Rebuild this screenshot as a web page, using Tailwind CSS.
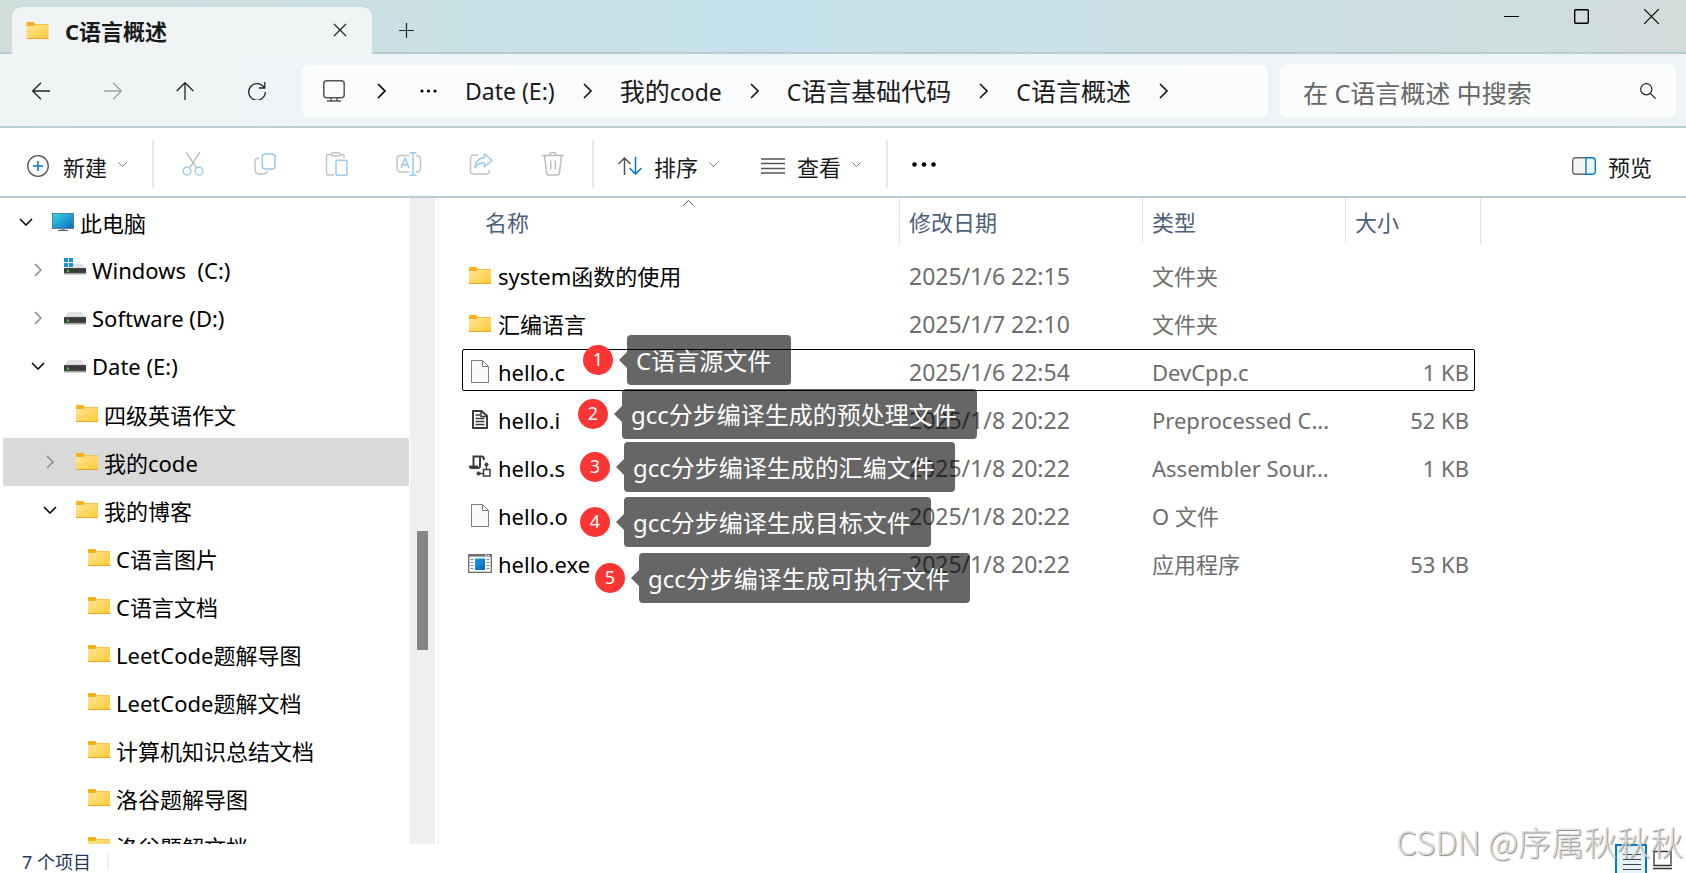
<!DOCTYPE html>
<html lang="zh-CN">
<head>
<meta charset="utf-8">
<meta name="viewport" content="width=device-width, initial-scale=1">
<title>C语言概述</title>
<script src="https://cdn.jsdelivr.net/npm/@tailwindcss/browser@4"></script>
</head>
<body class="flex h-screen flex-col overflow-hidden bg-white font-['Noto_Sans','Noto_Sans_CJK_SC',sans-serif] text-[22px] leading-8 text-[#1a1a1a]">

<!-- Shared symbols -->
<svg class="absolute size-0" aria-hidden="true">
  <defs>
    <linearGradient id="gf" x1="0" y1="0" x2="1" y2="1"><stop offset="0" stop-color="#ffe69c"/><stop offset="1" stop-color="#ffc933"/></linearGradient>
    <linearGradient id="gd" x1="0" y1="0" x2="0" y2="1"><stop offset="0" stop-color="#4a4a4a"/><stop offset="0.5" stop-color="#333"/><stop offset="1" stop-color="#4d4d4d"/></linearGradient>
    <linearGradient id="gm" x1="0" y1="0" x2="1" y2="1"><stop offset="0" stop-color="#36d8e2"/><stop offset="1" stop-color="#0a6cc4"/></linearGradient>
    <linearGradient id="gb" x1="0" y1="0" x2="1" y2="1"><stop offset="0" stop-color="#1f9be6"/><stop offset="1" stop-color="#0466b4"/></linearGradient>
    <symbol id="folder" viewBox="0 0 22 18"><path d="M0 1q0-1 1-1h6l2 2-1 2H0z" fill="#f7b316"/><path d="M0 4h7l2-2h13v14.500H0z" fill="url(#gf)"/><path d="M8.500 2.500H22" stroke="#f3c24a"/><path d="M0 16.500h22" stroke="#e6a823"/></symbol>
    <symbol id="drive" viewBox="0 0 22 18"><path d="M4 3h14l4 6H0z" fill="#dfe1e5"/><path d="M0 8h22v6H0z" fill="url(#gd)"/><path d="M0 14h22v1.500H0z" fill="#a3a3a3"/><path d="M3 10.500h2v2H3z" fill="#2be52b"/></symbol>
    <symbol id="windrive" viewBox="0 0 22 18"><path d="M9 6h9l4 5H0z" fill="#dfe1e5"/><path d="M0 10h22v5H0z" fill="url(#gd)"/><path d="M0 15h22v1.500H0z" fill="#a3a3a3"/><path d="M3 12h2v2H3z" fill="#2be52b"/><path d="M0 0h4v4H0zM5 0h4v4H5zM0 5h4v4H0zM5 5h4v4H5z" fill="#1292de"/></symbol>
    <symbol id="pc" viewBox="0 0 22 19"><path d="M0 0h22v16H0z" fill="#5b7c99"/><path d="M1 1h20v14H1z" fill="url(#gm)"/><path d="M9 16h4v2H9z" fill="#8f9499"/><path d="M6 17.500h10" stroke="#555b61"/></symbol>
    <symbol id="cr" viewBox="0 0 8 14"><path d="M1 1l6 6-6 6" fill="none" stroke="currentColor" stroke-width="1.500"/></symbol>
    <symbol id="cd" viewBox="0 0 14 8"><path d="M1 1l6 6 6-6" fill="none" stroke="currentColor" stroke-width="1.500"/></symbol>
    <symbol id="crumb" viewBox="0 0 9 16"><path d="M1 1l7 7-7 7" fill="none" stroke="currentColor" stroke-width="1.700"/></symbol>
    <symbol id="cds" viewBox="0 0 9 5"><path d="M.5.500l4 4 4-4" fill="none" stroke="#777"/></symbol>
    <symbol id="page" viewBox="0 0 18 23"><path d="M.5.500h11l6 6v16H.500z" fill="#fafafa" stroke="#808080"/><path d="M11.500.500v6h6" fill="none" stroke="#808080"/></symbol>
  </defs>
</svg>

<!-- Title bar -->
<header class="flex h-[54px] shrink-0 items-start border-b-2 border-[#b8ced3] bg-linear-to-r from-[#cfdedb] via-[#c4e1eb] via-45% to-[#d1dddb]">
  <div class="relative z-10 ml-3 mt-[7px] flex h-[47px] w-[360px] shrink-0 items-center rounded-t-[10px] bg-[#f0f4f5] pl-[14px] pr-[25px]">
    <svg class="h-[18px] w-[23px] shrink-0"><use href="#folder"/></svg>
    <h1 class="ml-4 flex-1 font-bold">C语言概述</h1>
    <button aria-label="关闭标签页" class="pb-[2px]"><svg class="size-[14px]" viewBox="0 0 14 14" fill="none" stroke="#222" stroke-width="1.200"><path d="M1 1l12 12M13 1L1 13"/></svg></button>
  </div>
  <button aria-label="新建标签页" class="ml-[27px] mt-[23px]"><svg class="size-[15px]" viewBox="0 0 15 15" stroke="#222" stroke-width="1.200"><path d="M7.500 0v15M0 7.500h15"/></svg></button>
  <div class="ml-auto mr-[27px] mt-[9px] flex items-center gap-[55px]">
    <button aria-label="最小化"><svg class="size-[15px]" viewBox="0 0 15 15" stroke="#000"><path d="M0 7.500h15"/></svg></button>
    <button aria-label="最大化"><svg class="size-[15px]" viewBox="0 0 15 15" fill="none" stroke="#000" stroke-width="1.400"><rect x=".7" y=".7" width="13.600" height="13.600" rx="1"/></svg></button>
    <button aria-label="关闭"><svg class="size-[15px]" viewBox="0 0 15 15" fill="none" stroke="#000" stroke-width="1.200"><path d="M0 0l15 15M15 0L0 15"/></svg></button>
  </div>
</header>

<!-- Navigation -->
<nav class="flex h-[74px] shrink-0 items-center border-b-2 border-[#b8ced3] bg-linear-to-r from-[#f0f4f5] via-[#edf5f7] to-[#f0f4f6] pl-8 pr-[10px] pt-[2px]">
  <div class="flex shrink-0 items-center gap-[54px]">
    <button aria-label="后退"><svg class="size-[18px]" viewBox="0 0 18 18" fill="none" stroke="#222" stroke-width="1.300"><path d="M18 9H.7M9 .7L.7 9 9 17.300"/></svg></button>
    <button aria-label="前进" disabled><svg class="size-[18px]" viewBox="0 0 18 18" fill="none" stroke="#9ea2a3" stroke-width="1.300"><path d="M0 9h17.300M9 .7L17.300 9 9 17.300"/></svg></button>
    <button aria-label="上移"><svg class="size-[18px]" viewBox="0 0 18 18" fill="none" stroke="#222" stroke-width="1.300"><path d="M9 18V.7M.7 9L9 .7 17.300 9"/></svg></button>
    <button aria-label="刷新"><svg class="size-[18px]" viewBox="0 0 18 18" fill="none" stroke="#222" stroke-width="1.300"><path d="M16.300 6A8.300 8.300 0 1 0 17.300 10M16.800 0v6h-6"/></svg></button>
  </div>
  <div class="ml-9 flex h-[53px] flex-1 items-center overflow-hidden rounded-lg bg-[#fbfcfe] pl-[21px] text-[25px] whitespace-nowrap">
    <button aria-label="此电脑"><svg class="size-[22px]" viewBox="0 0 22 22" fill="none" stroke="#555" stroke-width="1.500"><rect x=".8" y=".8" width="20.400" height="17" rx="3"/><path d="M8 18v3M14 18v3M4 21h14"/></svg></button>
    <svg class="ml-8 h-4 w-[9px] text-black"><use href="#crumb"/></svg>
    <button aria-label="更多" class="ml-[34px] mr-[28px]"><svg class="h-1 w-[17px]" viewBox="0 0 17 4"><circle cx="2" cy="2" r="1.600"/><circle cx="8.500" cy="2" r="1.600"/><circle cx="15" cy="2" r="1.600"/></svg></button>
    <div class="flex items-center gap-[28px]">
      <button class="text-[23px]">Date (E:)</button><svg class="h-4 w-[9px]"><use href="#crumb"/></svg>
      <button>我的<span class="text-[23px]">code</span></button><svg class="h-4 w-[9px]"><use href="#crumb"/></svg>
      <button><span class="text-[23px]">C</span>语言基础代码</button><svg class="h-4 w-[9px]"><use href="#crumb"/></svg>
      <button><span class="text-[23px]">C</span>语言概述</button><svg class="h-4 w-[9px]"><use href="#crumb"/></svg>
    </div>
  </div>
  <label class="ml-3 flex h-[54px] w-[396px] items-center rounded-lg bg-[#fbfdfc] pl-[23px] pr-5">
    <input type="search" aria-label="搜索" placeholder="在 C语言概述 中搜索" class="min-w-0 flex-1 bg-transparent pt-1 text-[25px] outline-none placeholder:text-[#666]">
    <svg class="size-4 shrink-0" viewBox="0 0 16 16" fill="none" stroke="#222" stroke-width="1.200"><circle cx="6.300" cy="6.300" r="5.600"/><path d="M10.300 10.300l5.400 5.400"/></svg>
  </label>
</nav>

<!-- Command bar -->
<div class="flex h-[70px] shrink-0 items-center border-b-2 border-[#b8ced3] pl-[27px] pr-[34px] pt-[2px] whitespace-nowrap">
  <button class="flex items-center pt-2">
    <svg class="mb-[2px] size-[22px]" viewBox="0 0 22 22" fill="none"><circle cx="11" cy="11" r="10.300" stroke="#555" stroke-width="1.300"/><path d="M11 6v10M6 11h10" stroke="#0078d4" stroke-width="1.500"/></svg>
    <span class="ml-[14px] mr-[11px]">新建</span>
    <svg class="mb-[6px] h-[5px] w-[9px]"><use href="#cds"/></svg>
  </button>
  <span class="ml-[25px] mt-[2px] h-12 w-[2px] bg-[#ebebeb]"></span>
  <div class="ml-[27px] flex items-center gap-12 pt-[2px]">
    <button aria-label="剪切" disabled><svg class="size-6" viewBox="0 0 24 24" fill="none" stroke-width="1.400"><path d="M5 0l10.500 16M19 0L8.500 16" stroke="#bdbdbd"/><circle cx="6" cy="19.200" r="3.900" stroke="#99c9ee"/><circle cx="18" cy="19.200" r="3.900" stroke="#99c9ee"/></svg></button>
    <button aria-label="复制" disabled><svg class="size-6" viewBox="0 0 24 24" fill="none" stroke-width="1.500"><path d="M6 6q-4 0-4 4v7q0 5 5 5h3q4 0 4-3" stroke="#c4c4c4"/><rect x="9.300" y="2" width="12.700" height="15" rx="3" stroke="#99c9ee"/></svg></button>
    <button aria-label="粘贴" disabled><svg class="size-6" viewBox="0 0 24 24" fill="none" stroke-width="1.500"><path d="M9 23H3q-1.500 0-1.500-1.500V4Q1.500 2.500 3 2.500h4M15 2.500h3q1 0 1 1.500v2" stroke="#c4c4c4"/><rect x="6.500" y=".8" width="9" height="3" rx="1.500" stroke="#c4c4c4"/><rect x="11" y="8.300" width="11" height="15" rx="1.500" stroke="#99c9ee"/></svg></button>
    <button aria-label="重命名" disabled><svg class="size-6 overflow-visible" viewBox="0 0 24 24" fill="none" stroke-width="1.500"><path d="M12.500 3.500H4Q0 3.500 0 7v9q0 4 4 4h8.500M19 3.500q4.500 0 4.500 4v8.500q0 4-4.500 4" stroke="#c4c4c4"/><path d="M16 .8v22.400M12.500.8h7M12.500 23.200h7M4 16l4-9.500L12 16M5.500 13h5" stroke="#99c9ee"/></svg></button>
    <button aria-label="共享" disabled><svg class="size-6" viewBox="0 0 24 24" fill="none" stroke-width="1.500"><path d="M9 3H5Q1.500 3 1.500 6.500v12Q1.500 22 5 22h12q3.500 0 3.500-4" stroke="#c4c4c4"/><path d="M15.500 1.800L23 8.500l-7.500 6.500v-4Q9 10.500 6 16q0-9.500 9.500-10.500z" stroke="#99c9ee" stroke-linejoin="round"/></svg></button>
    <button aria-label="删除" disabled><svg class="size-6" viewBox="0 0 24 24" fill="none" stroke="#bdbdbd" stroke-width="1.500"><path d="M1 3.500h22M8.500 3.500q0-3 3.500-3t3.500 3M3.500 3.500l2 17q.2 2.500 2.500 2.500h8q2.300 0 2.500-2.500l2-17M9.700 8.500v9M14.300 8.500v9"/></svg></button>
  </div>
  <span class="ml-[27px] mt-[2px] h-12 w-[2px] bg-[#ebebeb]"></span>
  <button class="ml-6 flex items-center pt-2">
    <svg class="mb-[2px] h-[18px] w-6" viewBox="0 0 24 18" fill="none" stroke-width="1.500"><path d="M6.500 18V1M.5 7l6-6 6 6" stroke="#555"/><path d="M17.500 0v17M11.500 11l6 6 6-6" stroke="#0078d4"/></svg>
    <span class="ml-3 mr-[11px]">排序</span>
    <svg class="mb-[6px] h-[5px] w-[9px]"><use href="#cds"/></svg>
  </button>
  <button class="ml-[43px] flex items-center pt-2">
    <svg class="mb-[2px] h-4 w-6" viewBox="0 0 24 16" stroke="#555" stroke-width="1.300"><path d="M0 1h24M0 5.500h24M0 10.500h24M0 15h24"/></svg>
    <span class="ml-3 mr-[11px]">查看</span>
    <svg class="mb-[6px] h-[5px] w-[9px]"><use href="#cds"/></svg>
  </button>
  <span class="ml-[25px] mt-[2px] h-12 w-[2px] bg-[#ebebeb]"></span>
  <button aria-label="查看更多" class="ml-6 pt-[2px]"><svg class="h-[5px] w-6" viewBox="0 0 24 5"><circle cx="2.500" cy="2.500" r="2.300"/><circle cx="12" cy="2.500" r="2.300"/><circle cx="21.500" cy="2.500" r="2.300"/></svg></button>
  <button class="ml-auto flex items-center gap-3 pt-2">
    <svg class="mb-[2px] h-[18px] w-6" viewBox="0 0 24 18" fill="none" stroke-width="1.400"><path d="M14 .7H4Q.7.700.7 4v10q0 3.300 3.300 3.300h10" fill="#f5f5f5" stroke="#666"/><path d="M14 .7h6q3.300 0 3.300 3.300v10q0 3.300-3.300 3.300h-6z" fill="#eef8ff" stroke="#0078d4"/></svg>
    <span>预览</span>
  </button>
</div>

<div class="flex min-h-0 flex-1">
  <!-- Folder tree -->
  <aside class="flex w-[439px] shrink-0 border-r-2 border-[#f5f5f5] text-black">
    <ul class="min-w-0 flex-1 overflow-hidden pl-[3px] pr-px whitespace-nowrap">
      <li class="flex h-12 items-center pl-[13px]"><span class="flex w-5 justify-center"><svg class="h-2 w-[14px]"><use href="#cd"/></svg></span><svg class="ml-4 h-[19px] w-[22px]"><use href="#pc"/></svg><span class="ml-[6px] pt-px">此电脑</span></li>
      <li class="flex h-12 items-center pl-[25px]"><span class="flex w-5 justify-center text-[#8a8a8a]"><svg class="h-[14px] w-2"><use href="#cr"/></svg></span><svg class="mb-[6px] ml-4 h-[18px] w-[22px]"><use href="#windrive"/></svg><span class="ml-[6px] whitespace-pre">Windows  (C:)</span></li>
      <li class="flex h-12 items-center pl-[25px]"><span class="flex w-5 justify-center text-[#8a8a8a]"><svg class="h-[14px] w-2"><use href="#cr"/></svg></span><svg class="ml-4 h-[18px] w-[22px]"><use href="#drive"/></svg><span class="ml-[6px]">Software (D:)</span></li>
      <li class="flex h-12 items-center pl-[25px]"><span class="flex w-5 justify-center"><svg class="h-2 w-[14px]"><use href="#cd"/></svg></span><svg class="ml-4 h-[18px] w-[22px]"><use href="#drive"/></svg><span class="ml-[6px]">Date (E:)</span></li>
      <li class="flex h-12 items-center pl-[73px]"><svg class="h-[18px] w-[22px]"><use href="#folder"/></svg><span class="ml-[6px] pt-px">四级英语作文</span></li>
      <li class="flex h-12 items-center rounded-xs bg-[#d9d9d9] pl-[37px]" aria-current="true"><span class="flex w-5 justify-center text-[#8a8a8a]"><svg class="h-[14px] w-2"><use href="#cr"/></svg></span><svg class="ml-4 h-[18px] w-[22px]"><use href="#folder"/></svg><span class="ml-[6px] pt-px">我的code</span></li>
      <li class="flex h-12 items-center pl-[37px]"><span class="flex w-5 justify-center"><svg class="h-2 w-[14px]"><use href="#cd"/></svg></span><svg class="ml-4 h-[18px] w-[22px]"><use href="#folder"/></svg><span class="ml-[6px] pt-px">我的博客</span></li>
      <li class="flex h-12 items-center pl-[85px]"><svg class="h-[18px] w-[22px]"><use href="#folder"/></svg><span class="ml-[6px] pt-px">C语言图片</span></li>
      <li class="flex h-12 items-center pl-[85px]"><svg class="h-[18px] w-[22px]"><use href="#folder"/></svg><span class="ml-[6px] pt-px">C语言文档</span></li>
      <li class="flex h-12 items-center pl-[85px]"><svg class="h-[18px] w-[22px]"><use href="#folder"/></svg><span class="ml-[6px] pt-px">LeetCode题解导图</span></li>
      <li class="flex h-12 items-center pl-[85px]"><svg class="h-[18px] w-[22px]"><use href="#folder"/></svg><span class="ml-[6px] pt-px">LeetCode题解文档</span></li>
      <li class="flex h-12 items-center pl-[85px]"><svg class="h-[18px] w-[22px]"><use href="#folder"/></svg><span class="ml-[6px] pt-px">计算机知识总结文档</span></li>
      <li class="flex h-12 items-center pl-[85px]"><svg class="h-[18px] w-[22px]"><use href="#folder"/></svg><span class="ml-[6px] pt-px">洛谷题解导图</span></li>
      <li class="flex h-12 items-center pl-[85px]"><svg class="h-[18px] w-[22px]"><use href="#folder"/></svg><span class="ml-[6px] pt-px">洛谷题解文档</span></li>
    </ul>
    <div class="mr-[2px] w-[25px] bg-[#efefef] pt-[333px]"><div class="mx-auto h-[119px] w-[11px] bg-[#858585]"></div></div>
  </aside>

  <!-- File list -->
  <main class="relative min-w-0 flex-1 pl-[23px]">
    <table class="w-[1019px] table-fixed border-collapse text-left whitespace-nowrap text-[#6d6d6d]">
      <colgroup><col class="w-[438px]"><col class="w-[243px]"><col class="w-[203px]"><col class="w-[135px]"></colgroup>
      <thead class="text-[#4c607a]">
        <tr class="h-[54px] align-top">
          <th class="relative p-0 font-normal"><div class="h-[46px] border-r border-[#e2e2e2] pl-[23px] pt-2">名称</div><svg class="absolute left-[221px] top-[2px] h-[6px] w-[11px]" viewBox="0 0 11 6" fill="none" stroke="#555"><path d="M.5 5.500l5-5 5 5"/></svg></th>
          <th class="p-0 font-normal"><div class="h-[46px] border-r border-[#e2e2e2] pl-[9px] pt-2">修改日期</div></th>
          <th class="p-0 font-normal"><div class="h-[46px] border-r border-[#e2e2e2] pl-[9px] pt-2">类型</div></th>
          <th class="p-0 font-normal"><div class="h-[46px] border-r border-[#e2e2e2] pl-[9px] pt-2">大小</div></th>
        </tr>
      </thead>
      <tbody>
        <tr class="h-12"><td class="p-0 text-black"><div class="flex items-center pl-[7px]"><svg class="h-[18px] w-[22px]"><use href="#folder"/></svg><span class="ml-[7px]">system函数的使用</span></div></td><td class="p-0 pl-[9px] text-[23px]">2025/1/6 22:15</td><td class="p-0 pl-[9px]">文件夹</td><td></td></tr>
        <tr class="h-12"><td class="p-0 text-black"><div class="flex items-center pl-[7px]"><svg class="h-[18px] w-[22px]"><use href="#folder"/></svg><span class="ml-[7px]">汇编语言</span></div></td><td class="p-0 pl-[9px] text-[23px]">2025/1/7 22:10</td><td class="p-0 pl-[9px]">文件夹</td><td></td></tr>
        <tr class="relative h-12 after:absolute after:left-0 after:right-[6px] after:top-px after:h-[42px] after:rounded-xs after:border after:border-black"><td class="p-0 text-black"><div class="flex items-center pl-[7px]"><svg class="mx-[2px] mb-[2px] h-[23px] w-[18px]"><use href="#page"/></svg><span class="ml-[7px]">hello.c</span></div></td><td class="p-0 pl-[9px] text-[23px]">2025/1/6 22:54</td><td class="p-0 pl-[9px]">DevCpp.c</td><td class="p-0 pr-3 text-right">1 KB</td></tr>
        <tr class="h-12"><td class="p-0 text-black"><div class="flex items-center pl-[7px]"><svg class="mx-[3px] mb-[2px] h-[19px] w-4" viewBox="0 0 16 19" fill="none" stroke="#3c3c3c"><path d="M1 1h8.500L15 6v12H1z" stroke-width="2"/><path d="M9 1v5.500h6" stroke-width="1.500"/><path d="M3.500 5H8M3.500 8.500h9M3.500 11.500h9M3.500 14.500h9" stroke-width="1.500"/></svg><span class="ml-[7px]">hello.i</span></div></td><td class="p-0 pl-[9px] text-[23px]">2025/1/8 20:22</td><td class="p-0 pl-[9px]">Preprocessed C...</td><td class="p-0 pr-3 text-right">52 KB</td></tr>
        <tr class="h-12"><td class="p-0 text-black"><div class="flex items-center pl-[7px]"><svg class="mb-1 h-[22px] w-[22px]" viewBox="0 0 22 22" fill="none" stroke="#3c3c3c"><path d="M4.500 11V1.500h8.500q2 0 2 3.500M11 1.500v9q0 2.500-2 2.500H2.500Q1 13 1 11.500h8" stroke-width="2"/><path d="M17.500 9.500v5M10 18.500h4" stroke-width="1.300"/><rect x="14.500" y="14.500" width="6.500" height="6.500" stroke-width="1.500"/><circle cx="17.500" cy="9.500" r="1.600" fill="#3c3c3c"/><circle cx="9.500" cy="18.500" r="1.600" fill="#3c3c3c"/></svg><span class="ml-[7px]">hello.s</span></div></td><td class="p-0 pl-[9px] text-[23px]">2025/1/8 20:22</td><td class="p-0 pl-[9px]">Assembler Sour...</td><td class="p-0 pr-3 text-right">1 KB</td></tr>
        <tr class="h-12"><td class="p-0 text-black"><div class="flex items-center pl-[7px]"><svg class="mx-[2px] mb-[2px] h-[23px] w-[18px]"><use href="#page"/></svg><span class="ml-[7px]">hello.o</span></div></td><td class="p-0 pl-[9px] text-[23px]">2025/1/8 20:22</td><td class="p-0 pl-[9px]">O 文件</td><td></td></tr>
        <tr class="h-12"><td class="p-0 text-black"><div class="flex items-center pl-[6px]"><svg class="mb-[2px] h-[19px] w-6" viewBox="0 0 24 19" fill="none"><path d="M.7.700h22.600v17.600H.700z" fill="#f7f7f7" stroke="#6d7175" stroke-width="1.300"/><path d="M0 1.300h24" stroke="#6d7175" stroke-width="2.600"/><path d="M17 1.500h1.500M19.500 1.500H21" stroke="#fff"/><rect x="7" y="4.500" width="10" height="11.500" fill="url(#gb)"/><path d="M2.500 5.500h3M2.500 8.500h3M2.500 11.500h3M2.500 14.500h3M18.500 5.500h3M18.500 8.500h3M18.500 11.500h3M18.500 14.500h3" stroke="#888"/></svg><span class="ml-[6px]">hello.exe</span></div></td><td class="p-0 pl-[9px] text-[23px]">2025/1/8 20:22</td><td class="p-0 pl-[9px]">应用程序</td><td class="p-0 pr-3 text-right">53 KB</td></tr>
      </tbody>
    </table>

    <!-- Numbered callouts over the list -->
    <div class="absolute left-[144px] top-[137px] flex items-center whitespace-nowrap text-2xl text-white"><span class="mr-[6px] size-[30px] rounded-full bg-[#fd3535] text-center text-lg leading-[28px]">1</span><svg class="h-4 w-2" viewBox="0 0 8 16"><path d="M8 0v16L0 8z" fill="#000" fill-opacity=".6"/></svg><span class="h-[50px] rounded-sm bg-black/60 pl-[9px] pr-5 leading-[52px]">C语言源文件</span></div>
    <div class="absolute left-[139px] top-[191px] flex items-center whitespace-nowrap text-2xl text-white"><span class="mr-[6px] size-[30px] rounded-full bg-[#fd3535] text-center text-lg leading-[28px]">2</span><svg class="h-4 w-2" viewBox="0 0 8 16"><path d="M8 0v16L0 8z" fill="#000" fill-opacity=".6"/></svg><span class="h-[50px] rounded-sm bg-black/60 pl-[9px] pr-5 leading-[52px]">gcc分步编译生成的预处理文件</span></div>
    <div class="absolute left-[141px] top-[244px] flex items-center whitespace-nowrap text-2xl text-white"><span class="mr-[6px] size-[30px] rounded-full bg-[#fd3535] text-center text-lg leading-[28px]">3</span><svg class="h-4 w-2" viewBox="0 0 8 16"><path d="M8 0v16L0 8z" fill="#000" fill-opacity=".6"/></svg><span class="h-[50px] rounded-sm bg-black/60 pl-[9px] pr-5 leading-[52px]">gcc分步编译生成的汇编文件</span></div>
    <div class="absolute left-[141px] top-[299px] flex items-center whitespace-nowrap text-2xl text-white"><span class="mr-[6px] size-[30px] rounded-full bg-[#fd3535] text-center text-lg leading-[28px]">4</span><svg class="h-4 w-2" viewBox="0 0 8 16"><path d="M8 0v16L0 8z" fill="#000" fill-opacity=".6"/></svg><span class="h-[50px] rounded-sm bg-black/60 pl-[9px] pr-5 leading-[52px]">gcc分步编译生成目标文件</span></div>
    <div class="absolute left-[156px] top-[355px] flex items-center whitespace-nowrap text-2xl text-white"><span class="mr-[6px] size-[30px] rounded-full bg-[#fd3535] text-center text-lg leading-[28px]">5</span><svg class="h-4 w-2" viewBox="0 0 8 16"><path d="M8 0v16L0 8z" fill="#000" fill-opacity=".6"/></svg><span class="h-[50px] rounded-sm bg-black/60 pl-[9px] pr-5 leading-[52px]">gcc分步编译生成可执行文件</span></div>
  </main>
</div>

<!-- Status bar -->
<footer class="relative flex h-[29px] shrink-0 items-stretch pl-[22px] pr-[14px] text-lg leading-9 text-[#1e395b]">
  <span>7 个项目</span>
  <span class="ml-4 mt-2 h-[18px] w-[2px] bg-[#f2f2f2]"></span>
  <div class="ml-auto flex items-stretch">
    <button aria-label="详细信息" class="w-8 border-2 border-b-0 border-[#0078d4] bg-[#e5f3fb] pl-[6px]"><svg class="h-[27px] w-[18px]" viewBox="0 0 18 27" stroke="#444"><path d="M0 8.500h18M0 13.500h18M0 18.500h18M0 23.500h18"/></svg></button>
    <button aria-label="大图标" class="ml-[6px]"><svg class="h-[29px] w-[19px]" viewBox="0 0 19 29" fill="none" stroke="#333" stroke-width="1.300"><path d="M1 7.500h17v14H1zM0 24.500h19"/></svg></button>
  </div>
  <span class="absolute -top-[26px] right-[3px] whitespace-nowrap font-['Noto_Sans_CJK_SC',sans-serif] text-[33px] font-light leading-[46px] text-[#dedede]/90 [text-shadow:1px_1px_1px_#8a8a8a]">CSDN @序属秋秋秋</span>
</footer>
</body>
</html>
